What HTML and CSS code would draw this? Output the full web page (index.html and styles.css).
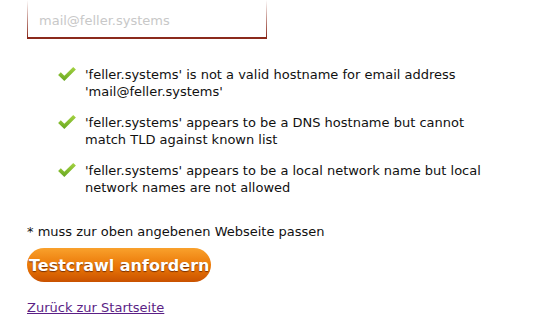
FILE: index.html
```html
<!DOCTYPE html>
<html lang="de">
<head>
    <meta charset="UTF-8">
    <title>Testcrawl</title>
    <link rel="stylesheet" href="styles.css">
</head>
<body>
    <div class="email-field">
        <input type="text" placeholder="mail@feller.systems">
    </div>

    <ul class="errors">
        <li>
            <svg class="check" viewBox="0 0 22 18" width="20" height="16">
                <defs>
                    <linearGradient id="g" x1="0" y1="0" x2="0" y2="1">
                        <stop offset="0" stop-color="#a6d443"/>
                        <stop offset="1" stop-color="#66a61f"/>
                    </linearGradient>
                </defs>
                <path d="M1 10 L4 7 L8 11 L18 1 L21 4 L8 17 Z" fill="url(#g)"/>
            </svg>
            <span>'feller.systems' is not a valid hostname for email address 'mail@feller.systems'</span>
        </li>
        <li>
            <svg class="check" viewBox="0 0 22 18" width="20" height="16">
                <path d="M1 10 L4 7 L8 11 L18 1 L21 4 L8 17 Z" fill="url(#g)"/>
            </svg>
            <span>'feller.systems' appears to be a DNS hostname but cannot match TLD against known list</span>
        </li>
        <li>
            <svg class="check" viewBox="0 0 22 18" width="20" height="16">
                <path d="M1 10 L4 7 L8 11 L18 1 L21 4 L8 17 Z" fill="url(#g)"/>
            </svg>
            <span>'feller.systems' appears to be a local network name but local network names are not allowed</span>
        </li>
    </ul>

    <p class="hint">* muss zur oben angebenen Webseite passen</p>

    <button class="submit">Testcrawl anfordern</button>

    <p class="back"><a href="#">Zurück zur Startseite</a></p>
</body>
</html>
```

FILE: styles.css
```css
body {
    margin: 0;
    padding: 0 27px;
    font-family: "DejaVu Sans", Verdana, sans-serif;
    font-size: 13px;
    color: #111;
    background: #fff;
}

.email-field {
    width: 240px;
    height: 39px;
    border-bottom: 2px solid #8b2a1c;
    background:
        linear-gradient(to bottom, #fff, #8b2a1c) left top / 1px 100% no-repeat,
        linear-gradient(to bottom, #fff, #8b2a1c) right top / 1px 100% no-repeat;
    box-sizing: border-box;
}

.email-field input {
    border: none;
    outline: none;
    background: transparent;
    font-family: "DejaVu Sans", Verdana, sans-serif;
    font-size: 13px;
    margin: 12px 0 0 10px;
    width: 220px;
}

.email-field input::placeholder {
    color: #c8c8c8;
}

.errors {
    list-style: none;
    margin: 27px 0 0 0;
    padding: 0 0 0 30px;
}

.errors li {
    display: flex;
    align-items: flex-start;
    line-height: 17px;
    margin-bottom: 14px;
    width: 446px;
}

.errors li:last-child {
    margin-bottom: 0;
}

.check {
    flex: none;
    margin: 0 8px 0 0;
}

.hint {
    margin: 28px 0 0 0;
    line-height: 16px;
}

.submit {
    display: block;
    margin-top: 8px;
    height: 34px;
    padding: 0 2px;
    border: none;
    border-radius: 17px;
    background: linear-gradient(to bottom, #f9a12c, #ea7606 55%, #c95200);
    color: #fff;
    font-family: "DejaVu Sans", Verdana, sans-serif;
    font-weight: bold;
    font-size: 16px;
    text-shadow: 0 1px 1px #7a3000;
    cursor: pointer;
}

.back {
    margin: 18px 0 0 0;
}

.back a {
    color: #5b1f86;
}
```
